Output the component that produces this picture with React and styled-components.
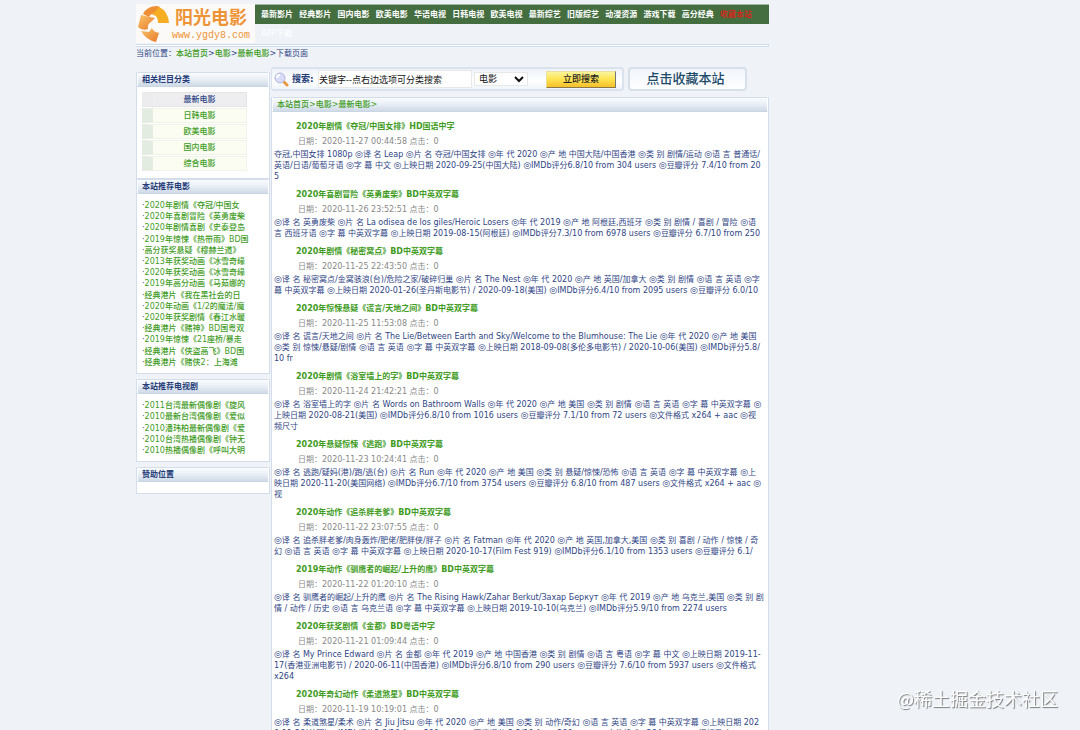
import React from 'react';
import styled, { createGlobalStyle, css } from 'styled-components';

const GlobalStyle = createGlobalStyle`
    * {
        box-sizing: border-box;
    }

    body {
        margin: 0;
        background: #eff3f8;
        color: #2f4585;
        font: 8px/11px Verdana, 'DejaVu Sans', 'Noto Sans CJK SC', sans-serif;
    }

    ul {
        margin: 0;
        padding: 0;
        list-style: none;
    }

    a {
        color: #3f9c1e;
        font-weight: 500;
        text-decoration: none;
    }

    button, input, select {
        font: 9px/12px 'Liberation Sans', 'Noto Sans CJK SC', sans-serif;
    }
`;

const Page = styled.div`
    height: 100vh;
    padding: 4px 311px 0 136px;
    overflow: hidden;
`;

const Header = styled.header`
    display: flex;
    align-items: flex-start;
    height: 40px;
`;

const Logo = styled.a`
    display: flex;
    flex: none;
    width: 119px;
    height: 39px;
    background: #fbfaf8;
`;

const LogoText = styled.div`
    display: flex;
    flex-direction: column;
    align-items: center;
    width: 80px;
    color: #ee9437;
`;

const LogoName = styled.span`
    font: bold 18px/25px 'Noto Sans CJK SC', sans-serif;
    white-space: nowrap;
`;

const LogoUrl = styled.span`
    font: 10px/14px 'Liberation Mono', monospace;
`;

const Nav = styled.nav`
    flex: 1;
`;

const NavList = styled.ul`
    display: flex;
    justify-content: space-between;
    padding: 0 17px 0 6px;
    border-top: 1px solid #a3b9a3;
    background: #446e40;
    line-height: 19px;
    white-space: nowrap;
`;

const NavLink = styled.a`
    color: ${props => props.$red ? '#cc2a1c' : '#ffffff'};
    font-weight: bold;
`;

const AppLink = styled(NavLink)`
    display: block;
    padding-left: 6px;
    font-weight: 500;
    line-height: 19px;
`;

const Divider = styled.div`
    height: 3px;
    border: 1px solid #d0dcea;
    border-left: 0;
    background: #ffffff;
`;

const Crumbs = styled.nav`
    line-height: 13px;
`;

const Columns = styled.div`
    display: grid;
    grid-template-columns: 134px 1fr;
    gap: 1px;
    padding-top: 7px;
`;

const Sidebar = styled.aside`
    display: flex;
    flex-direction: column;
    padding-top: 5px;
`;

const Panel = styled.section`
    margin-bottom: ${props => props.$gap || 0}px;
    border: 1px solid #d3deea;
    border-top: 0;
    background: #ffffff;
`;

const PanelTitle = styled.h2`
    height: 15px;
    margin: 0;
    padding-left: 4px;
    border: 1px solid #ffffff;
    border-top-color: #d3deea;
    border-bottom-color: #c9d6e4;
    background: linear-gradient(#fafcfe, #e8eef5 50%, #cfdae7);
    color: #243b78;
    font-size: 8px;
    line-height: 14px;
`;

const Categories = styled.ul`
    display: flex;
    flex-direction: column;
    gap: 1px;
    padding: 5px 22px 7px 5px;
`;

const Category = styled.li`
    height: 15px;
    border: 1px solid #f0f3e8;
    border-left: 11px solid #e3ece1;
    background: #fbfdf3;
    line-height: 14px;
    text-align: center;

    ${props => props.$active && css`
        border-color: #e4e4e6;
        border-left-color: #ececee;
        background: #eeeef0;

        a {
            color: #2f4585;
        }
    `}
`;

const Links = styled.ul`
    display: flex;
    flex-direction: column;
    justify-content: space-between;
    height: ${props => props.$height}px;
    margin: 6px 5px 5px;
    white-space: nowrap;
`;

const SearchRow = styled.div`
    display: flex;
    gap: 4px;
    height: 24px;
    margin-bottom: 6px;
`;

const SearchForm = styled.form`
    display: flex;
    align-items: center;
    width: 353px;
    height: 24px;
    padding-left: 2px;
    border: 2px solid #dae3ed;
    border-left-width: 1px;
    border-radius: 3px;
    background: linear-gradient(#eef3f9, #ffffff 60%, #f0f4f9);
`;

const SearchLabel = styled.label`
    width: 26px;
    margin-left: 3px;
    color: #243b78;
    font-weight: bold;
    font-size: 9px;
    white-space: nowrap;
`;

const SearchInput = styled.input`
    width: 154px;
    height: 18px;
    padding: 0;
    border: 1px solid #e8e8ea;
    background: #ffffff;
    color: #111111;
`;

const SearchSelect = styled.select`
    width: 54px;
    height: 14px;
    margin-left: 2px;
    padding: 0;
    border: 1px solid #e8e8ea;
    background: #ffffff;
    color: #111111;
`;

const SearchButton = styled.button`
    width: 70px;
    height: 17px;
    margin-left: 18px;
    padding: 0;
    border: 1px solid #eadf9c;
    border-right-color: #777777;
    border-bottom-color: #8b7a45;
    background: linear-gradient(#fbf49a, #fde350 50%, #f8bf2c);
    color: #222222;
    font-weight: 500;
`;

const FavoriteButton = styled.button`
    width: 119px;
    height: 24px;
    padding: 0 4px 0 0;
    border: 2px solid #d5e0ea;
    border-radius: 4px;
    background: linear-gradient(#f1f5fa, #ffffff);
    color: #1c4a68;
    font-weight: 500;
    font-size: 13px;
    line-height: 18px;
`;

const Movies = styled.div`
    padding: 7px 0 0 2px;
`;

const MovieItem = styled.article`
    margin-bottom: 5px;
`;

const MovieTitle = styled.h3`
    margin: 0;
    padding-left: 22px;
    font-size: 8px;
    line-height: 16px;

    a {
        font-weight: bold;
    }
`;

const MovieDate = styled.div`
    padding-left: 24px;
    color: #888888;
    line-height: 14px;
`;

const MovieInfo = styled.p`
    margin: 0;
`;

const InfoLine = styled.span`
    display: block;
`;

const Mark = styled.span`
    font-size: 9px;
    line-height: 1px;
`;

const Watermark = styled.div`
    position: fixed;
    right: 22px;
    bottom: 19px;
    color: #ffffff;
    font: 18px/26px 'Noto Sans CJK SC', sans-serif;
    text-shadow: 1px 1px 1px #777777;
`;

const navItems = [
    '最新影片', '经典影片', '国内电影', '欧美电影', '华语电视', '日韩电视', '欧美电视',
    '最新综艺', '旧版综艺', '动漫资源', '游戏下载', '高分经典', '收藏本站',
];

const categories = ['最新电影', '日韩电影', '欧美电影', '国内电影', '综合电影'];

const hotMovies = [
    '2020年剧情《夺冠/中国女',
    '2020年喜剧冒险《英勇废柴',
    '2020年剧情喜剧《史泰登岛',
    '2019年惊悚《热带雨》BD国',
    '高分获奖悬疑《穆赫兰道》',
    '2013年获奖动画《冰雪奇缘',
    '2020年获奖动画《冰雪奇缘',
    '2019年高分动画《马茹娜的',
    '经典港片《我在黑社会的日',
    '2020年动画《1/2的魔法/魔',
    '2020年获奖剧情《春江水暖',
    '经典港片《赌神》BD国粤双',
    '2019年惊悚《21座桥/暴走',
    '经典港片《侠盗高飞》BD国',
    '经典港片《赌侠2：上海滩',
];

const hotSeries = [
    '2011台湾最新偶像剧《旋风',
    '2010最新台湾偶像剧《爱似',
    '2010潘玮柏最新偶像剧《爱',
    '2010台湾热播偶像剧《钟无',
    '2010热播偶像剧《呼叫大明',
];

const movies = [
    {
        title: '2020年剧情《夺冠/中国女排》HD国语中字',
        date: '2020-11-27 00:44:58',
        info: `夺冠,中国女排 1080p ◎译 名 Leap ◎片 名 夺冠/中国女排 ◎年 代 2020 ◎产 地 中国大陆/中国香港 ◎类 别 剧情/运动 ◎语 言 普通话/
英语/日语/葡萄牙语 ◎字 幕 中文 ◎上映日期 2020-09-25(中国大陆) ◎IMDb评分6.8/10 from 304 users ◎豆瓣评分 7.4/10 from 20
5`,
    },
    {
        title: '2020年喜剧冒险《英勇废柴》BD中英双字幕',
        date: '2020-11-26 23:52:51',
        info: `◎译 名 英勇废柴 ◎片 名 La odisea de los giles/Heroic Losers ◎年 代 2019 ◎产 地 阿根廷,西班牙 ◎类 别 剧情 / 喜剧 / 冒险 ◎语
言 西班牙语 ◎字 幕 中英双字幕 ◎上映日期 2019-08-15(阿根廷) ◎IMDb评分7.3/10 from 6978 users ◎豆瓣评分 6.7/10 from 250`,
    },
    {
        title: '2020年剧情《秘密窝点》BD中英双字幕',
        date: '2020-11-25 22:43:50',
        info: `◎译 名 秘密窝点/金窝骇浪(台)/危险之家/破碎归巢 ◎片 名 The Nest ◎年 代 2020 ◎产 地 英国/加拿大 ◎类 别 剧情 ◎语 言 英语 ◎字
幕 中英双字幕 ◎上映日期 2020-01-26(圣丹斯电影节) / 2020-09-18(美国) ◎IMDb评分6.4/10 from 2095 users ◎豆瓣评分 6.0/10`,
    },
    {
        title: '2020年惊悚悬疑《谎言/天地之间》BD中英双字幕',
        date: '2020-11-25 11:53:08',
        info: `◎译 名 谎言/天地之间 ◎片 名 The Lie/Between Earth and Sky/Welcome to the Blumhouse: The Lie ◎年 代 2020 ◎产 地 美国
◎类 别 惊悚/悬疑/剧情 ◎语 言 英语 ◎字 幕 中英双字幕 ◎上映日期 2018-09-08(多伦多电影节) / 2020-10-06(美国) ◎IMDb评分5.8/
10 fr`,
    },
    {
        title: '2020年剧情《浴室墙上的字》BD中英双字幕',
        date: '2020-11-24 21:42:21',
        info: `◎译 名 浴室墙上的字 ◎片 名 Words on Bathroom Walls ◎年 代 2020 ◎产 地 美国 ◎类 别 剧情 ◎语 言 英语 ◎字 幕 中英双字幕 ◎
上映日期 2020-08-21(美国) ◎IMDb评分6.8/10 from 1016 users ◎豆瓣评分 7.1/10 from 72 users ◎文件格式 x264 + aac ◎视
频尺寸`,
    },
    {
        title: '2020年悬疑惊悚《逃跑》BD中英双字幕',
        date: '2020-11-23 10:24:41',
        info: `◎译 名 逃跑/疑妈(港)/跑/逃(台) ◎片 名 Run ◎年 代 2020 ◎产 地 美国 ◎类 别 悬疑/惊悚/恐怖 ◎语 言 英语 ◎字 幕 中英双字幕 ◎上
映日期 2020-11-20(美国网络) ◎IMDb评分6.7/10 from 3754 users ◎豆瓣评分 6.8/10 from 487 users ◎文件格式 x264 + aac ◎
视`,
    },
    {
        title: '2020年动作《追杀胖老爹》BD中英双字幕',
        date: '2020-11-22 23:07:55',
        info: `◎译 名 追杀胖老爹/肉身轰炸/肥佬/肥胖侠/胖子 ◎片 名 Fatman ◎年 代 2020 ◎产 地 英国,加拿大,美国 ◎类 别 喜剧 / 动作 / 惊悚 / 奇
幻 ◎语 言 英语 ◎字 幕 中英双字幕 ◎上映日期 2020-10-17(Film Fest 919) ◎IMDb评分6.1/10 from 1353 users ◎豆瓣评分 6.1/`,
    },
    {
        title: '2019年动作《驯鹰者的崛起/上升的鹰》BD中英双字幕',
        date: '2020-11-22 01:20:10',
        info: `◎译 名 驯鹰者的崛起/上升的鹰 ◎片 名 The Rising Hawk/Zahar Berkut/Захар Беркут ◎年 代 2019 ◎产 地 乌克兰,美国 ◎类 别 剧
情 / 动作 / 历史 ◎语 言 乌克兰语 ◎字 幕 中英双字幕 ◎上映日期 2019-10-10(乌克兰) ◎IMDb评分5.9/10 from 2274 users`,
    },
    {
        title: '2020年获奖剧情《金都》BD粤语中字',
        date: '2020-11-21 01:09:44',
        info: `◎译 名 My Prince Edward ◎片 名 金都 ◎年 代 2019 ◎产 地 中国香港 ◎类 别 剧情 ◎语 言 粤语 ◎字 幕 中文 ◎上映日期 2019-11-
17(香港亚洲电影节) / 2020-06-11(中国香港) ◎IMDb评分6.8/10 from 290 users ◎豆瓣评分 7.6/10 from 5937 users ◎文件格式
x264`,
    },
    {
        title: '2020年奇幻动作《柔道煞星》BD中英双字幕',
        date: '2020-11-19 10:19:01',
        info: `◎译 名 柔道煞星/柔术 ◎片 名 Jiu Jitsu ◎年 代 2020 ◎产 地 美国 ◎类 别 动作/奇幻 ◎语 言 英语 ◎字 幕 中英双字幕 ◎上映日期 202
0-11-20(美国) ◎IMDb评分2.8/10 from 290 users ◎豆瓣评分 3.2/10 from 290 users ◎文件格式 x264 + aac ◎视频尺寸`,
    },
];

function LogoMark() {
    return (
        <svg width="35" height="39" viewBox="0 0 35 39" aria-hidden="true">
            <defs>
                <linearGradient id="flame" x1="0" y1="0" x2="1" y2="1">
                    <stop offset="0" stopColor="#f9c66a" />
                    <stop offset="1" stopColor="#e9792b" />
                </linearGradient>
            </defs>
            <path d="M7 10 Q11 2 21 2 L24 3 L19 9 Q14 10 13 13 Z" fill="#ef8f35" />
            <path d="M23 3 Q32 7 33 19 L22 19 Q22 10 16 11 Z" fill="#f6ad22" />
            <path d="M2 23 L5 11 L19 14 L15 18 Q11 20 12 25 Q6 27 2 23 Z" fill="url(#flame)" />
            <path d="M5 27 L13 28 L16 24 Q17 28 23 29 L20 38 Q10 36 5 27 Z" fill="url(#flame)" />
        </svg>
    );
}

function SearchIcon() {
    return (
        <svg width="15" height="15" viewBox="0 0 15 15" aria-hidden="true">
            <path d="M9 9 L13 13" stroke="#e79a45" strokeWidth="3" strokeLinecap="round" />
            <circle cx="6" cy="6" r="5" fill="#d9dcf7" stroke="#b5b8de" />
            <path d="M3 6 Q3 3 6 3" fill="none" stroke="#ffffff" strokeWidth="2" />
        </svg>
    );
}

function LinkList({ items, height }) {
    return (
        <Links $height={height}>
            {items.map(item => <li key={item}>·<a href="#">{item}</a></li>)}
        </Links>
    );
}

function Movie({ movie }) {
    return (
        <MovieItem>
            <MovieTitle><a href="#">{movie.title}</a></MovieTitle>
            <MovieDate>日期：{movie.date} 点击：0</MovieDate>
            <MovieInfo>
                {movie.info.split('\n').map(line => (
                    <InfoLine key={line}>
                        {line.split('◎').map((part, i) => (
                            <React.Fragment key={i}>
                                {i > 0 && <Mark>◎</Mark>}
                                {part}
                            </React.Fragment>
                        ))}
                    </InfoLine>
                ))}
            </MovieInfo>
        </MovieItem>
    );
}

function App() {
    return (
        <Page>
            <GlobalStyle />
            <Header>
                <Logo href="#">
                    <LogoMark />
                    <LogoText>
                        <LogoName>阳光电影</LogoName>
                        <LogoUrl>www.ygdy8.com</LogoUrl>
                    </LogoText>
                </Logo>
                <Nav>
                    <NavList>
                        {navItems.map(item => (
                            <li key={item}><NavLink href="#" $red={item === '收藏本站'}>{item}</NavLink></li>
                        ))}
                    </NavList>
                    <AppLink href="#">APP下载</AppLink>
                </Nav>
            </Header>
            <Divider />
            <Crumbs>
                当前位置：<a href="#">本站首页</a>&gt;<a href="#">电影</a>&gt;<a href="#">最新电影</a>&gt;下载页面
            </Crumbs>
            <Columns>
                <Sidebar>
                    <Panel>
                        <PanelTitle>相关栏目分类</PanelTitle>
                        <Categories>
                            {categories.map((item, i) => (
                                <Category key={item} $active={i === 0}><a href="#">{item}</a></Category>
                            ))}
                        </Categories>
                    </Panel>
                    <Panel $gap={5}>
                        <PanelTitle>本站推荐电影</PanelTitle>
                        <LinkList items={hotMovies} height={168} />
                    </Panel>
                    <Panel $gap={5}>
                        <PanelTitle>本站推荐电视剧</PanelTitle>
                        <LinkList items={hotSeries} height={56} />
                    </Panel>
                    <Panel>
                        <PanelTitle>赞助位置</PanelTitle>
                        <Links $height={0} />
                    </Panel>
                </Sidebar>
                <main>
                    <SearchRow>
                        <SearchForm onSubmit={e => e.preventDefault()}>
                            <SearchIcon />
                            <SearchLabel htmlFor="keyword">搜索:</SearchLabel>
                            <SearchInput id="keyword" defaultValue="关键字--点右边选项可分类搜索" />
                            <SearchSelect aria-label="分类">
                                <option>电影</option>
                            </SearchSelect>
                            <SearchButton>立即搜索</SearchButton>
                        </SearchForm>
                        <FavoriteButton type="button">点击收藏本站</FavoriteButton>
                    </SearchRow>
                    <Panel>
                        <PanelTitle>
                            <a href="#">本站首页</a><a href="#">&gt;电影</a><a href="#">&gt;最新电影&gt;</a>
                        </PanelTitle>
                        <Movies>
                            {movies.map(movie => <Movie key={movie.date} movie={movie} />)}
                        </Movies>
                    </Panel>
                </main>
            </Columns>
        </Page>
    );
}

export default function Root() {
    return (
        <>
            <App />
            <Watermark>@稀土掘金技术社区</Watermark>
        </>
    );
}
